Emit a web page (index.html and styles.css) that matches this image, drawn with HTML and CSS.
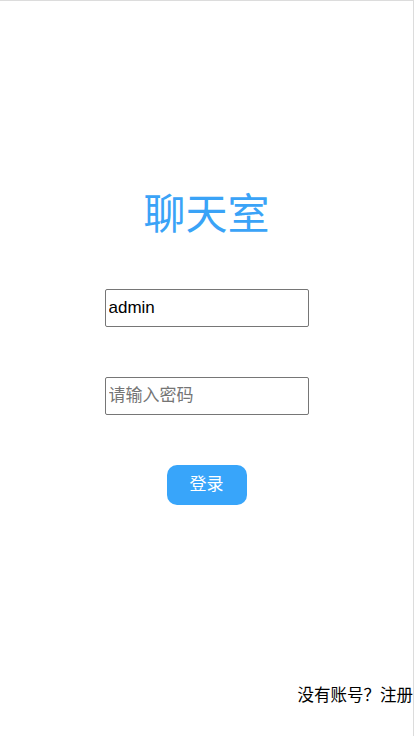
FILE: index.html
```html
<!DOCTYPE html>
<html lang="zh">
<head>
<meta charset="utf-8">
<title>聊天室</title>
<link rel="stylesheet" href="styles.css">
</head>
<body>
<div class="page">
  <main class="login">
    <h1 class="title">聊天室</h1>
    <input class="field" type="text" value="admin">
    <input class="field" type="password" placeholder="请输入密码">
    <button class="btn" type="button">登录</button>
  </main>
  <div class="footer">没有账号？注册</div>
</div>
</body>
</html>
```
FILE: styles.css
```css
html, body {
  margin: 0;
  padding: 0;
  background: #fff;
}
body {
  font-family: "Liberation Sans", Arial, "Noto Sans CJK SC", sans-serif;
  overflow: hidden;
}
.page {
  width: 413px;
  height: 735px;
  border-top: 1px solid #dcdcdc;
  border-right: 1px solid #dcdcdc;
  display: flex;
  flex-direction: column;
  overflow: hidden;
}
.login {
  display: flex;
  flex-direction: column;
  align-items: center;
  padding-top: 182px;
}
.title {
  margin: 0;
  font-family: "Noto Sans CJK SC", sans-serif;
  font-weight: 400;
  font-size: 42px;
  line-height: 56px;
  color: #3aa3f7;
}
.field {
  box-sizing: border-box;
  width: 204px;
  height: 38px;
  padding: 0 3px;
  border: 1px solid #767676;
  border-radius: 2px;
  font-family: "Liberation Sans", Arial, "Noto Sans CJK SC", sans-serif;
  font-size: 17px;
  color: #000;
  outline: none;
}
.field:first-of-type {
  margin-top: 50px;
}
.field::placeholder {
  color: #757575;
  font-family: "Noto Sans CJK SC", sans-serif;
}
.field + .field {
  margin-top: 50px;
}
.btn {
  margin-top: 50px;
  width: 80px;
  height: 40px;
  padding: 0 0 5px;
  border: none;
  border-radius: 10px;
  background: #38a5fa;
  color: #fff;
  font-family: "Noto Sans CJK SC", sans-serif;
  font-size: 17px;
}
.footer {
  margin-top: auto;
  margin-bottom: 30px;
  align-self: flex-end;
  white-space: nowrap;
  font-family: "Noto Sans CJK SC", sans-serif;
  font-size: 16.5px;
  line-height: 24px;
  color: #000;
}
```
